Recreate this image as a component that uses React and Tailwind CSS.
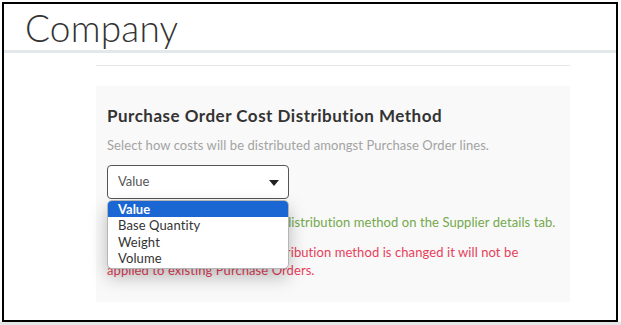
import { useState } from 'react';

const options = ['Value', 'Base Quantity', 'Weight', 'Volume'];

function CostSelect() {
  const [value] = useState('Value');

  return (
    <div className="relative w-[182px]">
      <div className="flex h-[34px] items-center justify-between rounded-[4px] border border-[#555] bg-white pl-[10px] pr-[9px] text-[13px] text-[#555]">
        <span>{value}</span>
        <svg width="10" height="6" viewBox="0 0 10 6" className="mt-[1px]">
          <path d="M0 0h10L5 6z" fill="#222" />
        </svg>
      </div>
      <div className="absolute left-0 top-[35px] z-10 w-[182px] overflow-hidden rounded-[5px] border border-[#b5b5b5] bg-white pb-[1px] shadow-[0_8px_18px_rgba(0,0,0,0.25)]">
        {options.map((opt) => (
          <div
            key={opt}
            className={
              opt === value
                ? 'h-[16px] bg-[#1a66d2] pl-[10px] text-[13px] leading-[16px] font-bold text-white'
                : 'h-[16.5px] pl-[10px] text-[13px] leading-[17px] tracking-[0.1px] text-[#333]'
            }
          >
            {opt}
          </div>
        ))}
      </div>
    </div>
  );
}

export default function App() {
  return (
    <div className="h-[325px] w-[621px] overflow-hidden bg-white font-['Lato',sans-serif]">
      <div className="ml-[2px] mt-[2px] h-[320px] w-[616px] border-2 border-black bg-white">
        <div className="flex h-[46px] items-end pl-[21px]">
          <h1 className="text-[37px] leading-[44px] font-light tracking-[0.2px] text-[#333]">Company</h1>
        </div>
        <div className="h-[3px] bg-[#e3e8ea]" />

        <div className="ml-[92px] w-[474px]">
          <div className="mt-[12px] h-px bg-[#e6e6e6]" />
          <div className="mt-[20px] h-[216px] bg-[#f9f9f9] px-[11px] pt-[19px]">
            <h2 className="text-[17px] leading-[22px] font-bold tracking-[0.5px] text-[#333]">
              Purchase Order Cost Distribution Method
            </h2>
            <p className="mt-[9px] text-[13px] leading-[18px] tracking-[0.08px] text-[#a3a3a3]">
              Select how costs will be distributed amongst Purchase Order lines.
            </p>
            <div className="mt-[11px]">
              <CostSelect />
            </div>
            <p className="mt-[14px] text-[13px] leading-[18px] tracking-[0.08px] text-[#74a84a]">
              You can also set a default cost distribution method on the Supplier details tab.
            </p>
            <p className="mt-[12px] text-[13px] leading-[18px] tracking-[0.08px] text-[#e8405a]">
              Please note that if the cost distribution method is changed it will not be
              <br />
              applied to existing Purchase Orders.
            </p>
          </div>
        </div>
      </div>
      <div className="h-[3px] bg-[#e6e6e6]" />
    </div>
  );
}
